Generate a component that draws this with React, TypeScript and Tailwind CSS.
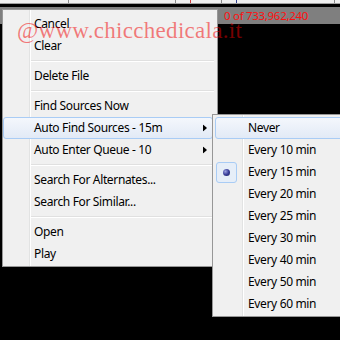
import React from "react";

const font = { fontFamily: '"Noto Sans", "Open Sans", sans-serif' };

function Arrow() {
  return (
    <svg width="4" height="7" viewBox="0 0 4 7" className="absolute right-[10px] top-1/2 -translate-y-1/2">
      <path d="M0 0 L4 3.5 L0 7 Z" fill="#000" />
    </svg>
  );
}

function Item({ label, hl, arrow }: { label: string; hl?: boolean; arrow?: boolean }) {
  return (
    <div className="relative h-[22px]">
      {hl && (
        <div className="absolute inset-y-0 left-0 right-[4px] rounded-[3px] border border-[#a9ccf5] bg-linear-to-b from-[#f4f7fc] to-[#e2eaf6]" />
      )}
      <div className="relative flex h-full items-center pl-[31px] text-[12px] tracking-[-0.35px] text-black">{label}</div>
      {arrow && <Arrow />}
    </div>
  );
}

function Sep() {
  return (
    <div className="flex h-[8px] flex-col justify-center pl-[28px] pr-[3px]">
      <div className="h-px bg-[#e0e0e0]" />
      <div className="h-px bg-white" />
    </div>
  );
}

function SubItem({ label, hl, radio }: { label: string; hl?: boolean; radio?: boolean }) {
  return (
    <div className="relative flex h-[22px] items-center">
      {hl && (
        <div className="absolute inset-y-0 left-[2px] right-0 rounded-[3px] border border-[#a9ccf5] bg-linear-to-b from-[#f4f7fc] to-[#e2eaf6]" />
      )}
      <div className="relative flex h-full w-[35px] items-center pl-[3px]">
        {radio && (
          <div className="flex h-[21px] w-[21px] items-center justify-center rounded-[3px] border border-[#a9ccf5] bg-[#e6eef8]">
            <div className="h-[7px] w-[7px] rounded-full bg-radial-[at_35%_35%] from-[#9aa0e0] via-[#3a3f9a] to-[#1a1d5a]" />
          </div>
        )}
      </div>
      <div className="relative text-[12px] tracking-[-0.35px] text-black">{label}</div>
    </div>
  );
}

export default function App() {
  const subs = ["Never", "Every 10 min", "Every 15 min", "Every 20 min", "Every 25 min", "Every 30 min", "Every 40 min", "Every 50 min", "Every 60 min"];
  return (
    <div className="relative h-[340px] w-[340px] overflow-hidden bg-black" style={font}>
      {/* header strip */}
      <div className="flex h-[3px] bg-[#f0f0f0]">
        <div className="w-[69px] border-r border-[#8a8a8a]" />
        <div className="w-[107px] border-r border-[#8a8a8a]" />
        <div className="w-[15px] border-r border-[#d04040]" />
        <div className="w-[31px] border-r border-[#8a8a8a]" />
        <div className="w-[15px] border-r border-[#304090]" />
        <div className="w-[98px] border-r border-[#8a8a8a]" />
      </div>
      <div className="h-px bg-[#a0a0a0]" />
      <div className="h-[3px]" />
      <div className="flex h-[17px] items-center bg-[#7f7f7f] pl-[224px] text-[11.5px] leading-none tracking-[-0.3px] text-[#ff1010]">
        0 of 733,962,240
      </div>

      {/* main menu (overlay) */}
      <div className="absolute left-[2px] top-[9px] flex h-[258px] w-[216px] flex-col border border-[#979797] bg-[#f0f0f0] pt-[3px]">
        <div className="absolute inset-y-0 left-[26px] w-px bg-[#e2e3e3]" />
        <div className="absolute inset-y-0 left-[27px] w-px bg-white" />
        <Item label="Cancel" />
        <Item label="Clear" />
        <Sep />
        <Item label="Delete File" />
        <Sep />
        <Item label="Find Sources Now" />
        <Item label="Auto Find Sources - 15m" hl arrow />
        <Item label="Auto Enter Queue - 10" arrow />
        <Sep />
        <Item label="Search For Alternates..." />
        <Item label="Search For Similar..." />
        <Sep />
        <Item label="Open" />
        <Item label="Play" />
      </div>

      {/* submenu (overlay) */}
      <div className="absolute left-[212px] top-[114px] flex h-[203px] w-[132px] flex-col border border-[#979797] bg-[#f0f0f0] pt-[2px]">
        <div className="absolute inset-y-0 left-[29px] w-px bg-[#e2e3e3]" />
        <div className="absolute inset-y-0 left-[30px] w-px bg-white" />
        {subs.map((s, i) => (
          <SubItem key={s} label={s} hl={i === 0} radio={i === 2} />
        ))}
      </div>

      {/* watermark */}
      <div
        className="pointer-events-none absolute left-[17px] top-[19px] text-[23px] leading-none tracking-[0.3px] text-[rgba(240,0,0,0.5)]"
        style={{ fontFamily: '"Liberation Serif", serif' }}
      >
        @www.chicchedicala.it
      </div>
    </div>
  );
}
